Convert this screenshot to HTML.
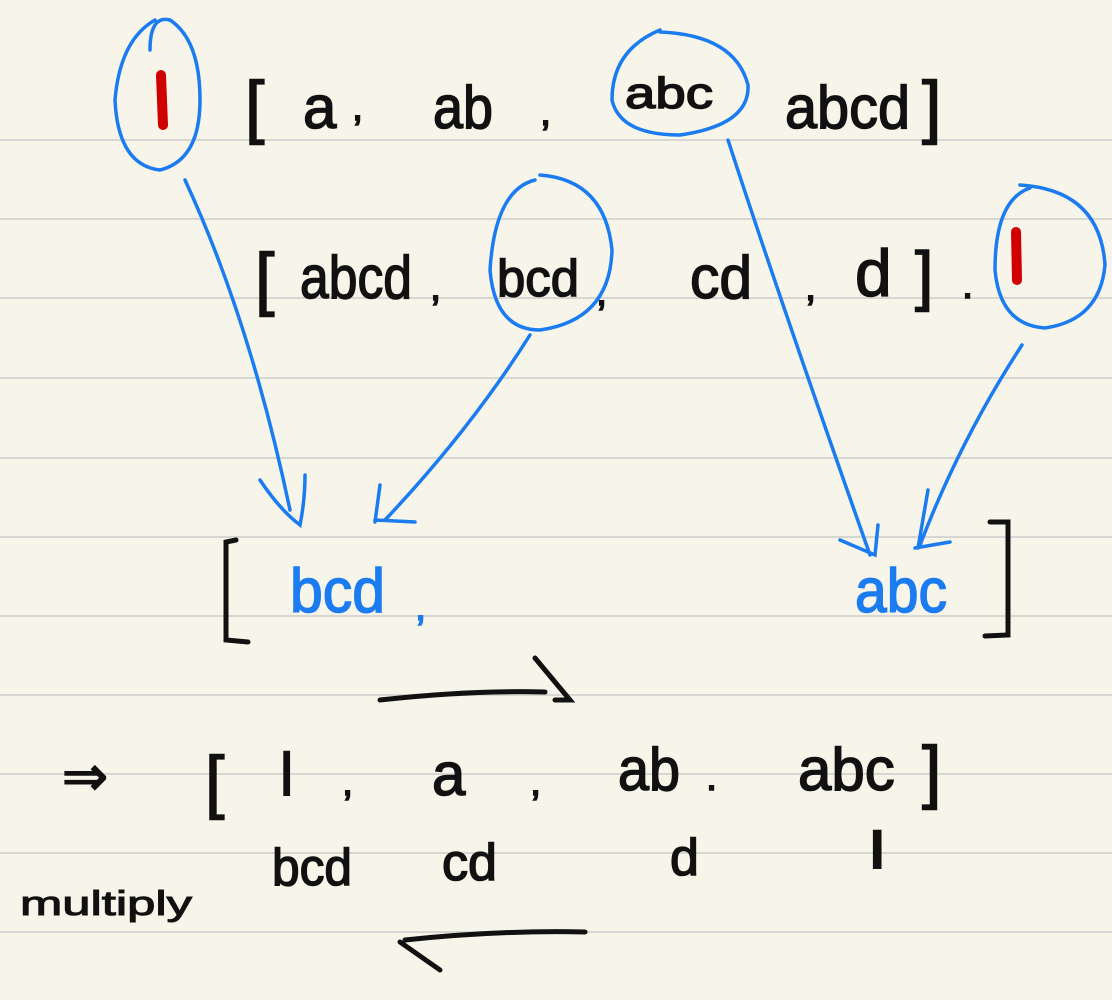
<!DOCTYPE html>
<html><head><meta charset="utf-8"><style>
html,body{margin:0;padding:0;background:#f7f5ea;}
svg{display:block}
text{font-family:"Liberation Sans",sans-serif;}
</style></head><body>
<svg width="1112" height="1000" viewBox="0 0 1112 1000" xmlns="http://www.w3.org/2000/svg">
<rect width="1112" height="1000" fill="#f7f5ea"/>
<g stroke="#d6d6d2" stroke-width="2">
<line x1="0" y1="140" x2="1112" y2="140"/><line x1="0" y1="219" x2="1112" y2="219"/>
<line x1="0" y1="298" x2="1112" y2="298"/><line x1="0" y1="378" x2="1112" y2="378"/>
<line x1="0" y1="458" x2="1112" y2="458"/><line x1="0" y1="537" x2="1112" y2="537"/>
<line x1="0" y1="616" x2="1112" y2="616"/><line x1="0" y1="695" x2="1112" y2="695"/>
<line x1="0" y1="774" x2="1112" y2="774"/><line x1="0" y1="853" x2="1112" y2="853"/>
<line x1="0" y1="932" x2="1112" y2="932"/>
</g>
<g fill="#111" stroke="#111" stroke-width="1.5" font-size="60">
<text x="245" y="130" font-size="70">[</text>
<text x="303" y="128">a</text><text x="352" y="120" font-size="40">,</text>
<text x="433" y="128" textLength="60" lengthAdjust="spacingAndGlyphs">ab</text><text x="540" y="125" font-size="40">,</text>
<text x="625" y="108" font-size="44" textLength="88" lengthAdjust="spacingAndGlyphs">abc</text>
<text x="785" y="128" textLength="125" lengthAdjust="spacingAndGlyphs">abcd</text><text x="922" y="130" font-size="70">]</text>
<text x="255" y="302" font-size="70">[</text>
<text x="300" y="298" textLength="112" lengthAdjust="spacingAndGlyphs">abcd</text><text x="430" y="300" font-size="40">,</text>
<text x="497" y="296" font-size="52" textLength="82" lengthAdjust="spacingAndGlyphs">bcd</text><text x="596" y="305" font-size="40">,</text>
<text x="690" y="298" textLength="62" lengthAdjust="spacingAndGlyphs">cd</text><text x="805" y="300" font-size="40">,</text>
<text x="855" y="296" font-size="66">d</text><text x="915" y="298" font-size="66">]</text><text x="962" y="298" font-size="40">.</text>
<text x="62" y="795" font-size="55">⇒</text>
<text x="205" y="805" font-size="70">[</text>
<text x="280" y="795">l</text><text x="342" y="795" font-size="40">,</text>
<text x="432" y="795">a</text><text x="530" y="795" font-size="40">,</text>
<text x="618" y="790" textLength="62" lengthAdjust="spacingAndGlyphs">ab</text><text x="706" y="790" font-size="40">.</text>
<text x="798" y="790" font-size="60">abc</text><text x="922" y="795" font-size="70">]</text>
<g font-size="52">
<text x="272" y="885" textLength="80" lengthAdjust="spacingAndGlyphs">bcd</text>
<text x="442" y="880" textLength="55" lengthAdjust="spacingAndGlyphs">cd</text>
<text x="670" y="875">d</text>
<text x="870" y="868" font-weight="bold">l</text>
</g>
<text x="20" y="915" font-size="34" stroke-width="1" textLength="172" lengthAdjust="spacingAndGlyphs">multiply</text>
</g>
<g fill="none" stroke="#111" stroke-width="5" stroke-linecap="round">
<path d="M236 540 L226 542 L226 640 L248 642"/>
<path d="M990 522 L1008 522 L1008 635 L985 636"/>
<path d="M380 700 Q470 690 545 692 M535 658 L570 700 L555 700"/>
<path d="M585 932 Q500 930 405 940 M400 942 L440 970"/>
</g>
<g fill="#1a7cf0" stroke="#1a7cf0" stroke-width="1.5" font-size="62">
<text x="290" y="612" textLength="95" lengthAdjust="spacingAndGlyphs">bcd</text>
<text x="415" y="620" font-size="40">,</text>
<text x="855" y="612" textLength="92" lengthAdjust="spacingAndGlyphs">abc</text>
</g>
<g fill="none" stroke="#1a7cf0" stroke-width="3.5" stroke-linecap="round">
<path d="M155 20 Q120 40 115 100 Q118 165 160 170 Q200 160 200 100 Q200 40 170 20 Q150 15 150 50"/>
<path d="M185 180 Q250 320 290 510 M260 480 Q280 510 300 525 Q305 500 305 475"/>
<path d="M535 180 Q495 190 490 270 Q495 330 540 330 Q610 320 612 250 Q605 180 540 175"/>
<path d="M530 335 Q470 430 385 520 M375 520 L415 522 M380 485 L375 522"/>
<path d="M660 30 Q612 50 612 100 Q620 135 680 135 Q750 125 748 85 Q735 35 660 32"/>
<path d="M728 140 Q780 300 870 555 M840 540 L875 555 L878 525"/>
<path d="M1030 188 Q995 200 995 270 Q1000 325 1045 328 Q1100 320 1105 265 Q1100 190 1020 185"/>
<path d="M1022 345 Q960 440 920 545 M915 548 L950 542 M928 490 L918 548"/>
</g>
<g stroke="#d00000" stroke-width="10" stroke-linecap="round">
<line x1="161" y1="75" x2="163" y2="125"/>
<line x1="1016" y1="232" x2="1017" y2="280"/>
</g>
</svg>
</body></html>
